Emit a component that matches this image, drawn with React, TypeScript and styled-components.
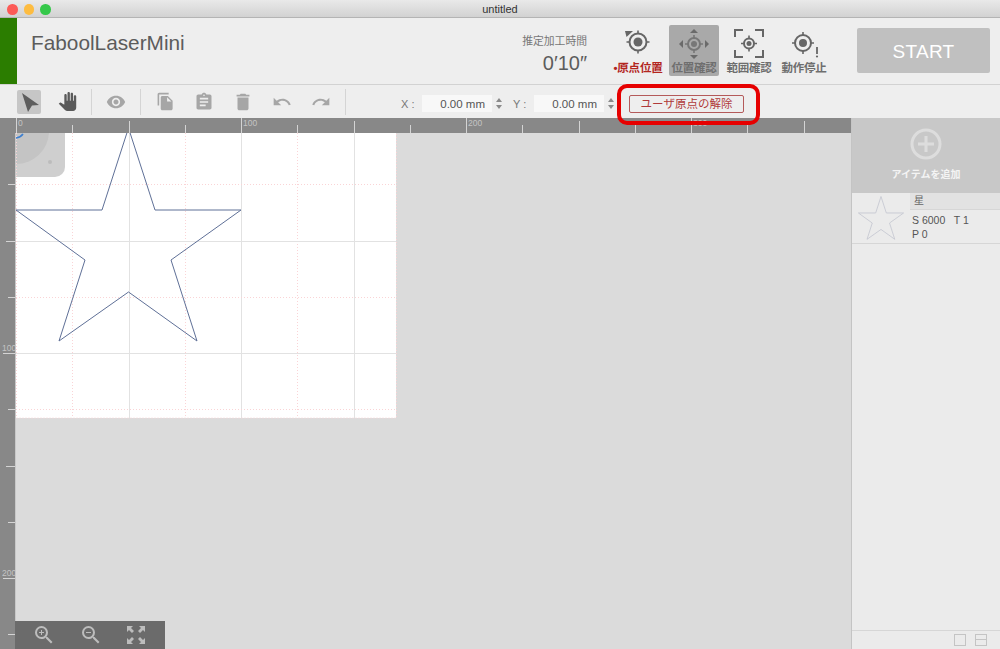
import * as React from "react";
import styled, { createGlobalStyle } from "styled-components";
import {
  MdAssignment,
  MdDelete,
  MdFileCopy,
  MdPanTool,
  MdRedo,
  MdRemoveRedEye,
  MdUndo,
  MdZoomIn,
  MdZoomOut,
} from "react-icons/md";

const FONT = `"Liberation Sans", "Noto Sans CJK JP", sans-serif`;
const STEP = 56.25;
const STAR =
  "128.5,128 155,210 241,210 171,260 197,341 128.5,292 59,341 85,260 16,210 102,210";

const GlobalStyle = createGlobalStyle`
  html, body { margin: 0; height: 100%; overflow: hidden; background: #dbdbdb; }
  * { box-sizing: border-box; }
`;

function Reticle({ cx, cy, r, dot, color }: { cx: number; cy: number; r: number; dot: number; color: string }) {
  const tick = r + 3;
  return (
    <g stroke={color} fill="none">
      <circle cx={cx} cy={cy} r={r} strokeWidth={2} />
      <circle cx={cx} cy={cy} r={dot} fill={color} stroke="none" />
      <path
        strokeWidth={1.6}
        d={`M${cx - tick} ${cy}h3M${cx + tick} ${cy}h-3M${cx} ${cy - tick}v3M${cx} ${cy + tick}v-3`}
      />
    </g>
  );
}

function OriginIcon() {
  return (
    <svg width="40" height="36" viewBox="0 0 40 36">
      <path d="M7 5h8L8.5 11z" fill="#666" />
      <Reticle cx={20} cy={16} r={8.5} dot={4.5} color="#666" />
    </svg>
  );
}

function MoveIcon() {
  return (
    <svg width="40" height="36" viewBox="0 0 40 36">
      <Reticle cx={20} cy={18} r={6} dot={3} color="#777" />
      <path
        d="M20 3l4 4h-8zM20 33l4-4h-8zM5 18l4-4v8zM35 18l-4-4v8z"
        fill="#6a6a6a"
      />
    </svg>
  );
}

function RangeIcon() {
  return (
    <svg width="40" height="36" viewBox="0 0 40 36">
      <path
        d="M6 11V4h8M26 4h8v7M34 24v7h-8M14 31H6v-7"
        stroke="#666"
        strokeWidth={2}
        fill="none"
      />
      <Reticle cx={20} cy={17.5} r={5} dot={2.5} color="#666" />
    </svg>
  );
}

function StopIcon() {
  return (
    <svg width="40" height="36" viewBox="0 0 40 36">
      <Reticle cx={19} cy={17} r={8} dot={4} color="#666" />
      <path d="M33 21v7" stroke="#666" strokeWidth={1.8} />
      <circle cx={33} cy={30.5} r={1.1} fill="#666" />
    </svg>
  );
}

function CursorIcon() {
  return (
    <svg width="24" height="24" viewBox="0 0 24 24">
      <path d="M5 3l17 12-7 .5-4 6.5z" fill="#5d5d5d" />
    </svg>
  );
}

function FitIcon() {
  return (
    <svg width="22" height="22" viewBox="0 0 22 22">
      <path
        d="M2 2h6L6 4l3 3-2 2-3-3-2 2zM20 2v6l-2-2-3 3-2-2 3-3-2-2zM2 20v-6l2 2 3-3 2 2-3 3 2 2zM20 20h-6l2-2-3-3 2-2 3 3 2-2z"
        fill="#bdbdbd"
      />
    </svg>
  );
}

function TopRuler() {
  const ticks = Array.from({ length: 15 }, (_, i) => i);
  return (
    <RulerSvg width="836" height="15" viewBox="16 118 836 15">
      {ticks.map((i) => {
        const x = Math.round(16 + i * STEP) + 0.5;
        const top = i % 4 === 0 ? 118 : i % 2 === 0 ? 121 : 125;
        return <line key={i} x1={x} x2={x} y1={top} y2={133} stroke="#d4d4d4" />;
      })}
      {[0, 4, 8, 12].map((i) => (
        <RulerLabel key={i} x={18 + i * STEP} y={126}>
          {i * 25}
        </RulerLabel>
      ))}
    </RulerSvg>
  );
}

function LeftRuler() {
  const ticks = Array.from({ length: 10 }, (_, i) => i).slice(1);
  return (
    <RulerSvg width="15" height="516" viewBox="0 133 15 516">
      {ticks.map((i) => {
        const y = Math.round(128 + i * STEP) + 0.5;
        const left = i % 4 === 0 ? 3 : i % 2 === 0 ? 6 : 8;
        return <line key={i} x1={left} x2={15} y1={y} y2={y} stroke="#d4d4d4" />;
      })}
      {[4, 8].map((i) => (
        <RulerLabel key={i} x={2} y={128 + i * STEP - 2}>
          {i * 25}
        </RulerLabel>
      ))}
    </RulerSvg>
  );
}

function Sheet() {
  const rows = Array.from({ length: 5 }, (_, i) => i + 1);
  const cols = Array.from({ length: 6 }, (_, i) => i + 1);
  return (
    <SheetSvg width="381" height="286" viewBox="16 133 381 286">
      <rect x="16" y="133" width="380" height="285" fill="#fff" />
      <path d="M16 133h49v34a10 10 0 0 1-10 10H16z" fill="#cfcfcf" />
      <path d="M16 133h33a33 33 0 0 1-33 31z" fill="#c4c4c4" />
      <circle cx="50" cy="162" r="2" fill="#bcbcbc" />
      <path d="M16 138a10 10 0 0 0 7-4" stroke="#3d7fd0" strokeWidth={1.6} fill="none" />
      {cols.map((i) => {
        const x = Math.round(16 + i * STEP) + 0.5;
        return i % 2 === 0 ? (
          <line key={i} x1={x} x2={x} y1={133} y2={418} stroke="#e2e2e2" />
        ) : (
          <line key={i} x1={x} x2={x} y1={133} y2={418} stroke="#fad4d6" strokeDasharray="1 2" />
        );
      })}
      {rows.map((i) => {
        const y = Math.round(128 + i * STEP) + 0.5;
        return i % 2 === 0 ? (
          <line key={i} x1={16} x2={396} y1={y} y2={y} stroke="#e2e2e2" />
        ) : (
          <line key={i} x1={16} x2={396} y1={y} y2={y} stroke="#fad4d6" strokeDasharray="1 2" />
        );
      })}
      <path d="M16.5 133v285h380V133" fill="none" stroke="#fad4d6" strokeDasharray="1 2" />
      <polygon points={STAR} fill="none" stroke="#5f7097" strokeWidth={1} />
    </SheetSvg>
  );
}

export default function App() {
  return (
    <Window>
      <GlobalStyle />
      <TitleBar>
        <Lights>
          <Light $color="#fc5b57" />
          <Light $color="#fdbc40" />
          <Light $color="#35c84a" />
        </Lights>
        untitled
      </TitleBar>

      <Header>
        <StatusStrip />
        <AppName>FaboolLaserMini</AppName>
        <TimeBlock>
          <TimeLabel>推定加工時間</TimeLabel>
          <TimeValue>0′10″</TimeValue>
        </TimeBlock>
        <ActionGroup>
          <ActionButton>
            <OriginIcon />
            <ActionLabel $alert>•原点位置</ActionLabel>
          </ActionButton>
          <ActionButton $active>
            <MoveIcon />
            <ActionLabel>位置確認</ActionLabel>
          </ActionButton>
          <ActionButton>
            <RangeIcon />
            <ActionLabel>範囲確認</ActionLabel>
          </ActionButton>
          <ActionButton>
            <StopIcon />
            <ActionLabel>動作停止</ActionLabel>
          </ActionButton>
        </ActionGroup>
        <StartButton>START</StartButton>
      </Header>

      <Toolbar>
        <ToolGroup $gap={14}>
          <ToolButton $selected>
            <CursorIcon />
          </ToolButton>
          <ToolButton $dark>
            <MdPanTool size={19} />
          </ToolButton>
        </ToolGroup>
        <Separator />
        <ToolButton>
          <MdRemoveRedEye size={20} />
        </ToolButton>
        <Separator />
        <ToolGroup $gap={15}>
          <ToolButton>
            <MdFileCopy size={19} />
          </ToolButton>
          <ToolButton>
            <MdAssignment size={20} />
          </ToolButton>
          <ToolButton>
            <MdDelete size={22} />
          </ToolButton>
          <ToolButton>
            <MdUndo size={20} />
          </ToolButton>
          <ToolButton>
            <MdRedo size={20} />
          </ToolButton>
        </ToolGroup>
        <Separator />
        <Field $offset={43}>
          <FieldLabel>X :</FieldLabel>
          <FieldInput>0.00 mm</FieldInput>
          <Spinner>
            <SpinUp />
            <SpinDown />
          </Spinner>
        </Field>
        <Field $offset={10}>
          <FieldLabel>Y :</FieldLabel>
          <FieldInput>0.00 mm</FieldInput>
          <Spinner>
            <SpinUp />
            <SpinDown />
          </Spinner>
        </Field>
        <ReleaseButton>
          ユーザ原点の解除
          <Highlight />
        </ReleaseButton>
      </Toolbar>

      <Main>
        <Workspace>
          <RulerCorner />
          <RulerTop>
            <TopRuler />
          </RulerTop>
          <RulerLeft>
            <LeftRuler />
          </RulerLeft>
          <Stage>
            <Sheet />
          </Stage>
          <ZoomBar>
            <MdZoomIn size={24} />
            <MdZoomOut size={24} />
            <FitIcon />
          </ZoomBar>
        </Workspace>

        <Sidebar>
          <AddItem>
            <AddCircle>
              <svg width="32" height="32" viewBox="0 0 32 32">
                <circle cx="16" cy="16" r="14" fill="none" stroke="#dddddd" strokeWidth={3} />
                <path d="M16 8v16M8 16h16" stroke="#dddddd" strokeWidth={3} />
              </svg>
            </AddCircle>
            <AddLabel>アイテムを追加</AddLabel>
          </AddItem>
          <ItemRow>
            <ItemThumb>
              <svg width="46" height="44" viewBox="14 126 229 218">
                <polygon points={STAR} fill="none" stroke="#c3c6d0" strokeWidth={4} />
              </svg>
            </ItemThumb>
            <ItemInfo>
              <ItemName>星</ItemName>
              <ItemParams>
                S 6000 &nbsp; T 1
                <br />P 0
              </ItemParams>
            </ItemInfo>
          </ItemRow>
          <SidebarSpace />
          <SidebarFooter>
            <ViewSingle />
            <ViewSplit />
          </SidebarFooter>
        </Sidebar>
      </Main>
    </Window>
  );
}

const Window = styled.div`
  width: 1000px;
  height: 649px;
  display: flex;
  flex-direction: column;
  font-family: ${FONT};
  background: #dbdbdb;
  overflow: hidden;
`;

const TitleBar = styled.div`
  position: relative;
  height: 18px;
  flex: none;
  background: linear-gradient(#e9e9e9, #d2d2d2);
  border-bottom: 1px solid #b4b4b4;
  font-size: 11px;
  line-height: 18px;
  text-align: center;
  color: #333;
`;

const Lights = styled.div`
  position: absolute;
  left: 7px;
  top: 4px;
  display: flex;
  gap: 6px;
`;

const Light = styled.span<{ $color: string }>`
  width: 10.5px;
  height: 10.5px;
  border-radius: 50%;
  background: ${(p) => p.$color};
`;

const Header = styled.div`
  height: 67px;
  flex: none;
  display: flex;
  align-items: stretch;
  background: #eeeeee;
  border-bottom: 1px solid #d2d2d2;
`;

const StatusStrip = styled.div`
  width: 17px;
  background: #2b7d00;
`;

const AppName = styled.div`
  margin: 12px 0 0 14px;
  font-size: 20.8px;
  line-height: 26px;
  color: #5c5c5c;
`;

const TimeBlock = styled.div`
  margin: 16px 0 0 auto;
  display: flex;
  flex-direction: column;
  align-items: flex-end;
  gap: 4px;
`;

const TimeLabel = styled.div`
  font-size: 10.8px;
  line-height: 14px;
  color: #777;
`;

const TimeValue = styled.div`
  font-size: 20px;
  line-height: 22px;
  color: #5c5c5c;
`;

const ActionGroup = styled.div`
  margin: 7px 0 0 26px;
  display: flex;
  gap: 5px;
  align-items: flex-start;
`;

const ActionButton = styled.div<{ $active?: boolean }>`
  width: 50px;
  height: 51px;
  padding-top: 1px;
  margin-left: ${(p) => (p.$active ? "1px" : "0")};
  display: flex;
  flex-direction: column;
  align-items: center;
  border-radius: 2px;
  background: ${(p) => (p.$active ? "#a9a9a9" : "transparent")};
`;

const ActionLabel = styled.div<{ $alert?: boolean }>`
  margin-top: -1px;
  font-size: 11.5px;
  line-height: 14px;
  font-weight: 700;
  white-space: nowrap;
  letter-spacing: -0.2px;
  color: ${(p) => (p.$alert ? "#b3261e" : "#6e6e6e")};
`;

const StartButton = styled.div`
  width: 133px;
  height: 45px;
  margin: 10px 10px 0 28px;
  border-radius: 2px;
  background: #c0c0c0;
  color: #fff;
  font-size: 19px;
  line-height: 47px;
  text-align: center;
  letter-spacing: 0.3px;
`;

const Toolbar = styled.div`
  height: 33px;
  flex: none;
  display: flex;
  align-items: center;
  padding-left: 17px;
  background: #eeeeee;
`;

const ToolGroup = styled.div<{ $gap: number }>`
  display: flex;
  gap: ${(p) => p.$gap}px;
`;

const ToolButton = styled.div<{ $selected?: boolean; $dark?: boolean }>`
  width: 24px;
  height: 24px;
  display: flex;
  align-items: center;
  justify-content: center;
  border-radius: 2px;
  background: ${(p) => (p.$selected ? "#c6c6c6" : "transparent")};
  color: ${(p) => (p.$dark ? "#5a5a5a" : "#a6a6a6")};
`;

const Separator = styled.div`
  width: 1px;
  height: 26px;
  margin: 0 12px;
  background: #d4d4d4;
`;

const Field = styled.div<{ $offset: number }>`
  align-self: flex-start;
  display: flex;
  align-items: center;
  margin: 10px 0 0 ${(p) => p.$offset}px;
`;

const FieldLabel = styled.div`
  width: 21px;
  font-size: 11px;
  color: #777;
`;

const FieldInput = styled.div`
  width: 70px;
  height: 17px;
  padding-right: 7px;
  background: #f8f8f8;
  font-size: 11.5px;
  line-height: 18px;
  text-align: right;
  color: #555;
`;

const Spinner = styled.div`
  width: 8px;
  margin-left: 3px;
  display: flex;
  flex-direction: column;
  gap: 3px;
  align-items: center;
`;

const SpinUp = styled.span`
  border: 3px solid transparent;
  border-top: 0;
  border-bottom: 4px solid #8a8a8a;
`;

const SpinDown = styled.span`
  border: 3px solid transparent;
  border-bottom: 0;
  border-top: 4px solid #8a8a8a;
`;

const ReleaseButton = styled.div`
  position: relative;
  align-self: flex-start;
  width: 115px;
  height: 18px;
  margin: 10px 0 0 14px;
  border: 1px solid #b45a5a;
  border-radius: 2px;
  font-size: 11.5px;
  line-height: 16px;
  text-align: center;
  color: #b03a3a;
  white-space: nowrap;
`;

const Highlight = styled.span`
  position: absolute;
  left: -13px;
  top: -12px;
  width: 143px;
  height: 41px;
  border: 4px solid #e60000;
  border-radius: 10px;
  z-index: 2;
`;

const Main = styled.div`
  flex: 1;
  display: flex;
  min-height: 0;
`;

const Workspace = styled.div`
  position: relative;
  flex: 1;
  display: grid;
  grid-template-columns: 16px 1fr;
  grid-template-rows: 15px 1fr;
  min-width: 0;
`;

const RulerCorner = styled.div`
  background: #888888;
`;

const RulerTop = styled.div`
  background: #888888;
  overflow: hidden;
`;

const RulerLeft = styled.div`
  background: #888888;
  border-right: 1px solid #c8c8c8;
  overflow: hidden;
`;

const RulerSvg = styled.svg`
  display: block;
`;

const RulerLabel = styled.text`
  font-family: ${FONT};
  font-size: 8.5px;
  fill: #c4c4c4;
`;

const Stage = styled.div`
  background: #dbdbdb;
  overflow: hidden;
`;

const SheetSvg = styled.svg`
  display: block;
`;

const ZoomBar = styled.div`
  position: absolute;
  left: 15px;
  bottom: 0;
  width: 150px;
  height: 28px;
  padding: 0 18px 0 17px;
  display: flex;
  align-items: center;
  justify-content: space-between;
  background: #6b6b6b;
  color: #bdbdbd;
`;

const Sidebar = styled.div`
  width: 149px;
  flex: none;
  display: flex;
  flex-direction: column;
  background: #ebebeb;
  border-left: 1px solid #c4c4c4;
`;

const AddItem = styled.div`
  height: 75px;
  flex: none;
  display: flex;
  flex-direction: column;
  align-items: center;
  padding-top: 10px;
  background: #c8c8c8;
`;

const AddCircle = styled.div`
  height: 32px;
`;

const AddLabel = styled.div`
  margin-top: 8px;
  font-size: 10px;
  line-height: 14px;
  font-weight: 700;
  color: #f4f4f4;
`;

const ItemRow = styled.div`
  height: 51px;
  flex: none;
  display: flex;
  border-bottom: 1px solid #d6d6d6;
`;

const ItemThumb = styled.div`
  width: 58px;
  display: flex;
  align-items: center;
  justify-content: center;
`;

const ItemInfo = styled.div`
  flex: 1;
  display: flex;
  flex-direction: column;
`;

const ItemName = styled.div`
  height: 17px;
  padding-left: 4px;
  background: #e2e2e2;
  border-bottom: 1px solid #d6d6d6;
  font-size: 10px;
  line-height: 15px;
  color: #666;
`;

const ItemParams = styled.div`
  padding: 3px 0 0 2px;
  font-size: 10.5px;
  line-height: 14px;
  color: #555;
`;

const SidebarSpace = styled.div`
  flex: 1;
`;

const SidebarFooter = styled.div`
  height: 19px;
  flex: none;
  display: flex;
  justify-content: flex-end;
  align-items: center;
  gap: 9px;
  padding: 0 13px 0 0;
  border-top: 1px solid #d6d6d6;
`;

const ViewSingle = styled.span`
  width: 12px;
  height: 12px;
  border: 1px solid #c4c4c4;
`;

const ViewSplit = styled.span`
  width: 12px;
  height: 12px;
  border: 1px solid #c4c4c4;
  background: linear-gradient(#ebebeb 4px, #c4c4c4 4px, #c4c4c4 5px, #ebebeb 5px);
`;
